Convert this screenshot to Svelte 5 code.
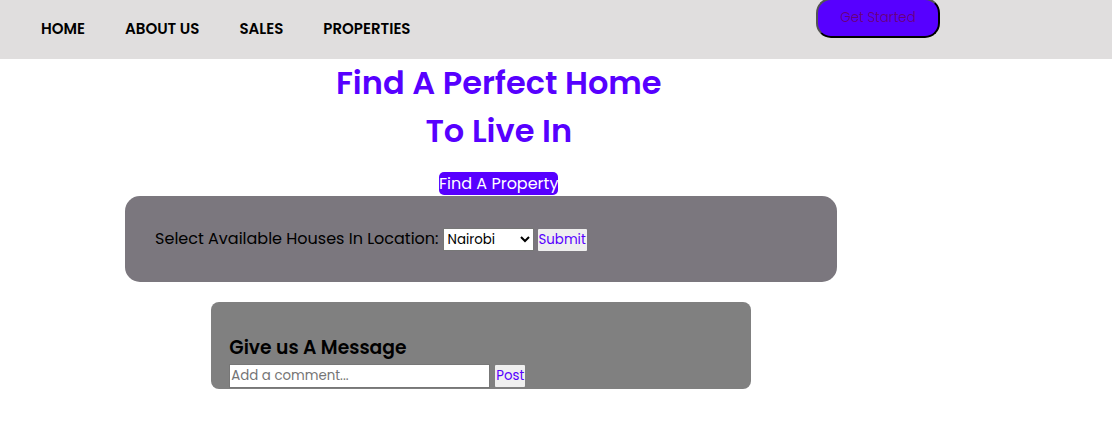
<script>
  const links = ['HOME', 'ABOUT US', 'SALES', 'PROPERTIES'];
  const cities = ['Nairobi', 'Mombasa', 'Kisumu', 'Nakuru'];
  let city = $state('Nairobi');
  let comment = $state('');
</script>

<header>
  <nav>
    {#each links as link}
      <a href="#top">{link}</a>
    {/each}
  </nav>
  <button class="start" type="button">Get Started</button>
</header>

<main>
  <section class="hero">
    <h1>Find A Perfect Home<br />To Live In</h1>
    <button class="find" type="button">Find A Property</button>
  </section>

  <form class="search" onsubmit={(e) => e.preventDefault()}>
    <label for="location">Select Available Houses In Location:</label>
    <select id="location" bind:value={city}>
      {#each cities as name}
        <option value={name}>{name}</option>
      {/each}
    </select>
    <button class="plain" type="submit">Submit</button>
  </form>

  <form class="message" onsubmit={(e) => e.preventDefault()}>
    <h3><label for="comment">Give us A Message</label></h3>
    <div class="row">
      <input id="comment" type="text" placeholder="Add a comment..." bind:value={comment} />
      <button class="plain" type="submit">Post</button>
    </div>
  </form>
</main>

<style>
  :global(body) {
    margin: 0;
    background: #fff;
    color: #000;
    font-family: Poppins, Inter, sans-serif;
    font-size: 16px;
    line-height: 24px;
  }

  button,
  input,
  select {
    box-sizing: border-box;
    margin: 0;
    font-family: inherit;
    line-height: 20px;
  }

  header {
    display: flex;
    align-items: flex-start;
    justify-content: space-between;
    box-sizing: border-box;
    min-height: 59px;
    padding-right: 172px;
    background: #e0dede;
  }

  nav {
    display: flex;
    gap: 40px;
    padding: 17px 0 18px 41px;
  }

  nav a {
    color: #000;
    font-size: 15px;
    font-weight: 600;
    text-decoration: none;
  }

  .start {
    min-width: 124px;
    height: 40px;
    margin-top: -2px;
    padding: 0 20px;
    border: 2px outset #000;
    border-radius: 15px;
    background: #5700ff;
    color: #6a0078;
    font-weight: 300;
  }

  .hero {
    display: flex;
    flex-direction: column;
    align-items: center;
    width: 64%;
    margin-left: 12.85%;
  }

  h1 {
    margin: 0 0 17px;
    color: #5700ff;
    font-size: 32px;
    font-weight: 600;
    line-height: 48px;
    text-align: center;
  }

  .find {
    height: 23px;
    margin-bottom: 1px;
    padding: 0;
    border: 0;
    border-radius: 5px;
    background: #5700ff;
    color: #fff;
    font-size: 16px;
    line-height: 23px;
  }

  .search {
    display: flex;
    align-items: baseline;
    gap: 4px;
    box-sizing: border-box;
    width: 64%;
    min-height: 86px;
    margin-left: 11.25%;
    padding: 31px 30px;
    border-radius: 15px;
    background: #7b777e;
  }

  select {
    width: 91px;
    height: 23px;
    padding: 0;
    border: 1px solid #777;
    border-radius: 0;
    background-color: #fff;
    color: #000;
  }

  .plain {
    height: 22px;
    padding: 0 1px;
    border: 0;
    border-radius: 1px;
    background: #efefef;
    color: #5700ff;
  }

  .message {
    box-sizing: border-box;
    width: 48.5%;
    margin: 20px 0 0 19%;
    padding: 31px 18px 1px;
    border-radius: 8px;
    background: #808080;
  }

  h3 {
    margin: 0;
    font-weight: 600;
    line-height: 29px;
  }

  .row {
    display: flex;
    align-items: center;
    gap: 5px;
    padding-top: 2px;
  }

  input {
    width: 261px;
    height: 24px;
    padding: 0 1px;
    border: 1px solid #777;
    background: #fff;
  }

  input::placeholder {
    color: #757575;
    opacity: 1;
  }
</style>
